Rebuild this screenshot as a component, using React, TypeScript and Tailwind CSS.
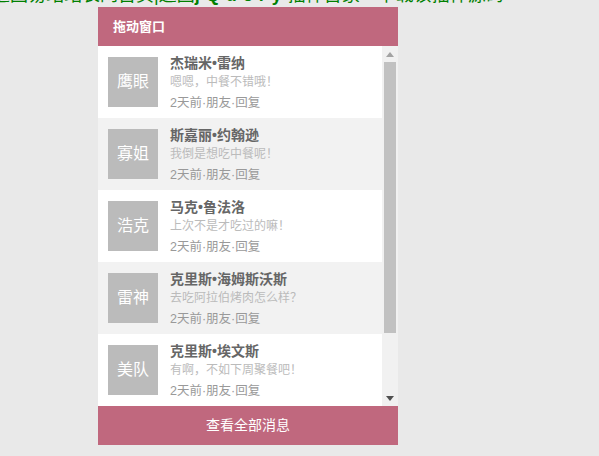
import React from "react";

const items = [
  { avatar: "鹰眼", name: "杰瑞米•雷纳", msg: "嗯嗯，中餐不错哦！" },
  { avatar: "寡姐", name: "斯嘉丽•约翰逊", msg: "我倒是想吃中餐呢！" },
  { avatar: "浩克", name: "马克•鲁法洛", msg: "上次不是才吃过的嘛！" },
  { avatar: "雷神", name: "克里斯•海姆斯沃斯", msg: "去吃阿拉伯烤肉怎么样？" },
  { avatar: "美队", name: "克里斯•埃文斯", msg: "有啊，不如下周聚餐吧！" },
];

export default function App() {
  return (
    <div
      className="min-h-[456px] w-full overflow-hidden bg-[#e9e9e9]"
      style={{ fontFamily: '"Liberation Sans", "Noto Sans CJK SC", sans-serif' }}
    >
      <div className="-mt-[17px] -ml-[8px] h-[24px] whitespace-nowrap text-[18px] leading-[24px] text-[#008000]">
        返回易站站长网首页|返回<span className="font-bold tracking-[6px]">jQuery</span>插件首家　下载该插件源码
      </div>
      <div className="ml-[98px] w-[300px]">
        <div className="flex h-[39px] items-center bg-[#c0687e] pl-[15px] text-[13px] font-bold text-white">
          拖动窗口
        </div>
        <div className="flex h-[360px]">
          <div className="flex-1">
            {items.map((it, i) => (
              <div
                key={i}
                className={`flex h-[72px] items-start pl-[10px] pt-[11px] ${i % 2 === 1 ? "bg-[#f2f2f2]" : "bg-white"}`}
              >
                <div className="flex h-[50px] w-[50px] items-center justify-center bg-[#bbbbbb] text-[16px] text-white">
                  {it.avatar}
                </div>
                <div className="-mt-[3px] ml-[12px] flex flex-col">
                  <div className="h-[18px] text-[14px] font-bold leading-[18px] text-[#666666]">{it.name}</div>
                  <div className="h-[20px] text-[12px] leading-[20px] text-[#bbbbbb]">{it.msg}</div>
                  <div className="h-[22px] text-[12.5px] leading-[22px] text-[#999999]">2天前·朋友·回复</div>
                </div>
              </div>
            ))}
          </div>
          <div className="flex w-[16px] flex-col bg-[#f1f1f1]">
            <div className="flex h-[16px] items-center justify-center">
              <svg width="8" height="5" viewBox="0 0 8 5">
                <path d="M4 0 L8 5 L0 5 Z" fill="#a3a3a3" />
              </svg>
            </div>
            <div className="mx-[2px] h-[271px] bg-[#c1c1c1]" />
            <div className="flex-1" />
            <div className="flex h-[16px] items-center justify-center">
              <svg width="8" height="5" viewBox="0 0 8 5">
                <path d="M0 0 L8 0 L4 5 Z" fill="#505050" />
              </svg>
            </div>
          </div>
        </div>
        <div className="flex h-[39px] items-center justify-center bg-[#c0687e] text-[14px] text-white">
          查看全部消息
        </div>
      </div>
    </div>
  );
}
